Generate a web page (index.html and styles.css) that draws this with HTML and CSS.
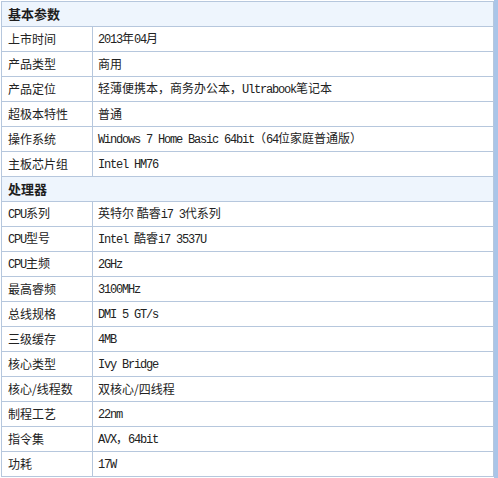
FILE: index.html
```html
<!DOCTYPE html>
<html lang="zh-CN">
<head>
<meta charset="utf-8">
<title>参数</title>
<link rel="stylesheet" href="styles.css">
</head>
<body>
<div class="page">
<table class="spec">
<colgroup><col class="c-label"><col class="c-value"></colgroup>
<tbody>
<tr class="group"><th colspan="2">基本参数</th></tr>
<tr><td class="label">上市时间</td><td><span class="en">2013</span>年<span class="en">04</span>月</td></tr>
<tr><td class="label">产品类型</td><td>商用</td></tr>
<tr><td class="label">产品定位</td><td>轻薄便携本，商务办公本，<span class="en">Ultrabook</span>笔记本</td></tr>
<tr><td class="label">超极本特性</td><td>普通</td></tr>
<tr><td class="label">操作系统</td><td><span class="en">Windows 7 Home Basic 64bit</span>（<span class="en">64</span>位家庭普通版）</td></tr>
<tr><td class="label">主板芯片组</td><td><span class="en">Intel HM76</span></td></tr>
<tr class="group"><th colspan="2">处理器</th></tr>
<tr><td class="label"><span class="en">CPU</span>系列</td><td>英特尔 酷睿<span class="en">i7 3</span>代系列</td></tr>
<tr><td class="label"><span class="en">CPU</span>型号</td><td><span class="en">Intel </span>酷睿<span class="en">i7 3537U</span></td></tr>
<tr><td class="label"><span class="en">CPU</span>主频</td><td><span class="en">2GHz</span></td></tr>
<tr><td class="label">最高睿频</td><td><span class="en">3100MHz</span></td></tr>
<tr><td class="label">总线规格</td><td><span class="en">DMI 5 GT/s</span></td></tr>
<tr><td class="label">三级缓存</td><td><span class="en">4MB</span></td></tr>
<tr><td class="label">核心类型</td><td><span class="en">Ivy Bridge</span></td></tr>
<tr><td class="label">核心/线程数</td><td>双核心/四线程</td></tr>
<tr><td class="label">制程工艺</td><td><span class="en">22nm</span></td></tr>
<tr><td class="label">指令集</td><td><span class="en">AVX</span>，<span class="en">64bit</span></td></tr>
<tr><td class="label">功耗</td><td><span class="en">17W</span></td></tr>
</tbody>
</table>
</div>
</body>
</html>
```
FILE: styles.css
```css
html, body {
  margin: 0;
  padding: 0;
  background: #ffffff;
}
.page {
  box-sizing: border-box;
  width: 498px;
  height: 478px;
  padding: 1px 0 0 1px;
  border-right: 4px solid #aac5e8;
  overflow: hidden;
  font-family: "Noto Sans CJK SC", "Noto Sans", sans-serif;
  font-size: 12px;
  color: #222222;
}
.spec {
  border-collapse: collapse;
  width: 493px;
  table-layout: fixed;
}
.c-label { width: 91px; }
.spec tr {
  height: 25px;
}
.spec td, .spec th {
  border: 1px solid #b6c7dd;
  padding: 0 5px;
  vertical-align: middle;
  text-align: left;
  white-space: nowrap;
  line-height: 16px;
}
.spec td.label {
  padding-left: 6px;
}
.group th {
  background: #eef5fd;
  font-weight: bold;
  font-size: 13px;
  padding-left: 6px;
  color: #1e1e1e;
}
.en {
  font-family: "Liberation Mono", monospace;
  font-size: 12px;
  letter-spacing: -1.2px;
}
```
